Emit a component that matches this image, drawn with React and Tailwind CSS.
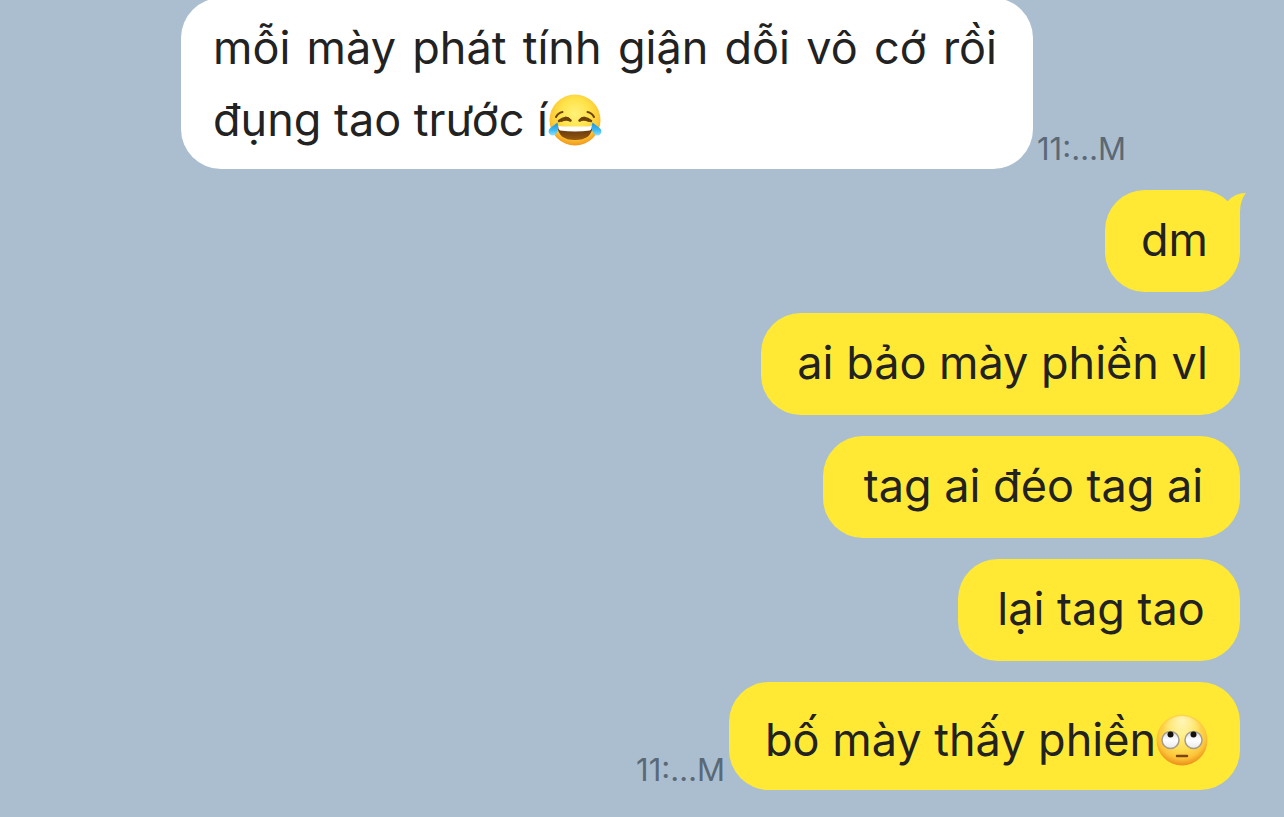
function JoyEmoji() {
  return (
    <svg role="img" aria-label="face with tears of joy" viewBox="0 0 108 104" className="inline-block h-[52px] w-[54px] align-[-10px]">
      <defs>
        <radialGradient id="joyFace" cx="50%" cy="38%" r="64%">
          <stop offset="0" stopColor="#fff27a" />
          <stop offset="0.45" stopColor="#ffe34a" />
          <stop offset="0.75" stopColor="#fdc934" />
          <stop offset="1" stopColor="#ef8f1a" />
        </radialGradient>
        <linearGradient id="joyMouth" x1="0" y1="0" x2="0" y2="1">
          <stop offset="0" stopColor="#59300c" />
          <stop offset="1" stopColor="#96590f" />
        </linearGradient>
        <linearGradient id="joyTear" x1="0" y1="0" x2="0" y2="1">
          <stop offset="0" stopColor="#1f8fdc" />
          <stop offset="0.6" stopColor="#3dbcf5" />
          <stop offset="1" stopColor="#8ee2fb" />
        </linearGradient>
      </defs>
      <circle cx="54" cy="52" r="51" fill="url(#joyFace)" />
      <g fill="none" stroke="#6d4309" strokeLinecap="round" strokeLinejoin="round">
        <path d="M16 46Q20 38 29 36M92 46Q88 38 79 36" strokeWidth="4" />
        <path d="M22 54Q36 42 45 53M86 54Q72 42 63 53" strokeWidth="5" />
        <path d="M26 54Q36 50 44 53M82 54Q72 50 64 53" strokeWidth="4" />
      </g>
      <path d="M19 65Q54 67 89 65Q87 92 54 92Q21 92 19 65Z" fill="url(#joyMouth)" />
      <path d="M20 64Q54 66 88 64Q88 70 84 73Q54 77 24 73Q20 70 20 64Z" fill="#fff" />
      <path d="M19 57Q23 72 16 80Q9 86 3 80Q-2 72 7 66Q14 61 19 57Z" fill="url(#joyTear)" />
      <path d="M89 57Q85 72 92 80Q99 86 105 80Q110 72 101 66Q94 61 89 57Z" fill="url(#joyTear)" />
    </svg>
  );
}

function RollingEyesEmoji() {
  return (
    <svg role="img" aria-label="face with rolling eyes" viewBox="0 0 104 104" className="inline-block size-[52px] align-[-10px]">
      <defs>
        <radialGradient id="rollFace" cx="50%" cy="38%" r="64%">
          <stop offset="0" stopColor="#ffef80" />
          <stop offset="0.45" stopColor="#ffe056" />
          <stop offset="0.75" stopColor="#fcc438" />
          <stop offset="1" stopColor="#e98614" />
        </radialGradient>
        <radialGradient id="rollShine" cx="50%" cy="10%" r="45%">
          <stop offset="0" stopColor="#fffbd0" stopOpacity="0.8" />
          <stop offset="1" stopColor="#fffbd0" stopOpacity="0" />
        </radialGradient>
        <linearGradient id="rollEye" x1="0" y1="0" x2="0" y2="1">
          <stop offset="0" stopColor="#dcdce2" />
          <stop offset="0.5" stopColor="#ffffff" />
          <stop offset="1" stopColor="#e9e9ec" />
        </linearGradient>
      </defs>
      <circle cx="52" cy="52" r="51" fill="url(#rollFace)" />
      <circle cx="52" cy="50" r="46" fill="url(#rollShine)" />
      <circle cx="29" cy="52" r="17" fill="url(#rollEye)" stroke="#a39c8e" strokeWidth="3" />
      <circle cx="75" cy="52" r="17" fill="url(#rollEye)" stroke="#a39c8e" strokeWidth="3" />
      <circle cx="29" cy="41" r="6" fill="#14100b" />
      <circle cx="75" cy="41" r="6" fill="#14100b" />
      <path d="M42 84H62" stroke="#7c430b" strokeWidth="5" strokeLinecap="round" />
    </svg>
  );
}

function Time() {
  return <time className="text-[31px] leading-[40px] text-[#5a6975]">11:…M</time>;
}

function Sent({ children, className = "pt-3.5 pb-4", tail = false, time = false }) {
  return (
    <li className="flex items-end justify-end gap-1">
      {time && <Time />}
      <div className={`relative rounded-[40px] bg-[#ffe935] pr-8 pl-9 ${className}`}>
        {tail && (
          <svg aria-hidden="true" viewBox="0 0 36 40" className="absolute top-0 -right-[6px] h-10 w-9">
            <path d="M12 16L18 11Q25 3 36 3Q30 10 30 22V40H10Z" fill="#ffe935" />
          </svg>
        )}
        <p className="relative text-center">{children}</p>
      </div>
    </li>
  );
}

export default function App() {
  return (
    <main className="min-h-screen overflow-hidden bg-[#abbed0] pr-11 pb-7 font-['Inter','Noto_Sans',sans-serif] text-[45px] leading-[72px] text-[#222]">
      <ul className="flex flex-col gap-[21px]">
        <li className="-mt-0.5 ml-[181px] flex items-end gap-1">
          <div className="max-w-[852px] rounded-[40px] bg-white pt-3.5 pr-9 pb-[13px] pl-8">
            <p className="text-justify">
              mỗi mày phát tính giận dỗi vô cớ rồi đụng tao trước í<JoyEmoji />
            </p>
          </div>
          <Time />
        </li>
        <Sent tail>dm</Sent>
        <Sent>ai bảo mày phiền vl</Sent>
        <Sent className="min-w-[417px] pt-3.5 pb-4">tag ai đéo tag ai</Sent>
        <Sent className="min-w-[282px] pt-3.5 pb-4">lại tag tao</Sent>
        <Sent time className="pt-[22px] pb-3.5">
          bố mày thấy phiền<RollingEyesEmoji />
        </Sent>
      </ul>
    </main>
  );
}
